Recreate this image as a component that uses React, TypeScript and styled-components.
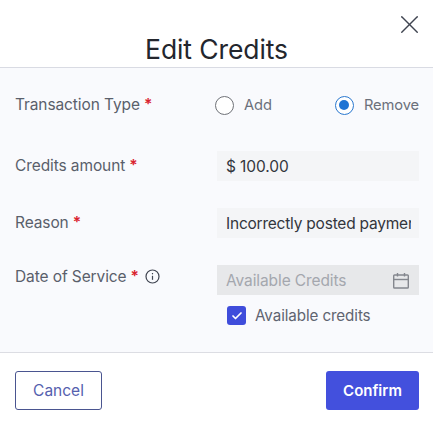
import styled, { createGlobalStyle } from 'styled-components';
import { X, Check } from 'lucide-react';

const GlobalStyle = createGlobalStyle`
  html, body {
    margin: 0;
    padding: 0;
    background: #ffffff;
    font-family: Inter, "Noto Sans", sans-serif;
  }
  * { box-sizing: border-box; }
`;

const Dialog = styled.div`
  width: 433px;
  height: 424px;
  display: flex;
  flex-direction: column;
  overflow: hidden;
  background: #ffffff;
`;

const Header = styled.header`
  height: 68px;
  padding: 9px 8px 0;
  display: flex;
  flex-direction: column;
  border-bottom: 1px solid #d9dbe3;
`;

const CloseButton = styled.button`
  align-self: flex-end;
  width: 31px;
  height: 24px;
  padding: 0;
  border: 0;
  background: none;
  color: #3f4450;
  display: flex;
`;

const Title = styled.h2`
  margin: 0;
  font-size: 26.5px;
  line-height: 32px;
  font-weight: 400;
  letter-spacing: -0.1px;
  color: #23262d;
  text-align: center;
`;

const Body = styled.div`
  height: 285px;
  padding: 27px 14px 0 15px;
  background: #f9fafd;
  border-bottom: 1px solid #dcdde3;
  display: flex;
  flex-direction: column;
`;

const Row = styled.div<{ $height: number }>`
  height: ${(p) => p.$height}px;
  display: grid;
  grid-template-columns: 202px 202px;
`;

const Label = styled.label<{ $offset?: number }>`
  display: flex;
  align-items: flex-start;
  gap: 4px;
  padding-top: ${(p) => p.$offset ?? 0}px;
  font-size: 15.5px;
  line-height: 20px;
  letter-spacing: -0.1px;
  color: #5a5f6b;
`;

const Star = styled.span`
  color: #d9232e;
  font-weight: 600;
`;

const InfoIcon = styled.svg`
  flex: none;
  width: 15px;
  height: 15px;
  margin: 2px 0 0 2px;
  color: #3f4450;
`;

const RadioGroup = styled.div`
  display: flex;
  align-items: center;
  justify-content: space-between;
  height: 20px;
  margin-left: -2px;
`;

const RadioOption = styled.span`
  display: flex;
  align-items: center;
  gap: 10px;
  font-size: 14.7px;
  letter-spacing: -0.1px;
  color: #6b707b;
`;

const RadioCircle = styled.span<{ $checked?: boolean }>`
  width: 19px;
  height: 19px;
  border-radius: 50%;
  border: 1.5px solid ${(p) => (p.$checked ? '#2a78cf' : '#6f7278')};
  background: #ffffff;
  display: flex;
  align-items: center;
  justify-content: center;
  &::after {
    content: '';
    display: ${(p) => (p.$checked ? 'block' : 'none')};
    width: 10px;
    height: 10px;
    border-radius: 50%;
    background: #1f74d4;
  }
`;

const Field = styled.div<{ $disabled?: boolean }>`
  height: 30px;
  padding: 0 8px 0 9px;
  display: flex;
  align-items: center;
  justify-content: space-between;
  overflow: hidden;
  white-space: nowrap;
  font-size: 15.5px;
  letter-spacing: -0.1px;
  background: ${(p) => (p.$disabled ? '#e7e8ea' : '#f4f5f7')};
  color: ${(p) => (p.$disabled ? '#a4a7ae' : '#33363d')};
`;

const FieldText = styled.span`
  flex: 1;
  overflow: hidden;
`;

const ReasonText = styled(FieldText)`
  letter-spacing: -0.22px;
`;

const CalendarIcon = styled.svg`
  flex: none;
  width: 18px;
  height: 18px;
  margin: 1px 1px 0 0;
  color: #84878e;
`;

const DateColumn = styled.div`
  display: flex;
  flex-direction: column;
  gap: 11px;
`;

const CheckRow = styled.div`
  display: flex;
  align-items: center;
  gap: 9px;
  padding-left: 10px;
  font-size: 15.2px;
  letter-spacing: -0.1px;
  color: #5f6470;
`;

const CheckBox = styled.span`
  width: 19px;
  height: 19px;
  border-radius: 3px;
  background: #3f4ddb;
  color: #ffffff;
  display: flex;
  align-items: center;
  justify-content: center;
`;

const Footer = styled.footer`
  flex: 1;
  padding: 18px 14px 0 15px;
  display: flex;
  justify-content: space-between;
  align-items: flex-start;
`;

const CancelButton = styled.button`
  width: 87px;
  height: 39px;
  border: 1px solid #4a5590;
  border-radius: 3px;
  background: #ffffff;
  color: #5560ae;
  font-family: inherit;
  font-size: 15.5px;
`;

const ConfirmButton = styled.button`
  width: 93px;
  height: 39px;
  border: 0;
  border-radius: 3px;
  background: #4350dd;
  color: #ffffff;
  font-family: inherit;
  font-size: 15px;
  font-weight: 600;
`;

const App = () => {
  return (
    <Dialog>
      <GlobalStyle />
      <Header>
        <CloseButton aria-label="Close">
          <X size={31} strokeWidth={1.1} />
        </CloseButton>
        <Title>Edit Credits</Title>
      </Header>
      <Body>
        <Row $height={56}>
          <Label>
            Transaction Type <Star>*</Star>
          </Label>
          <RadioGroup>
            <RadioOption>
              <RadioCircle />
              Add
            </RadioOption>
            <RadioOption>
              <RadioCircle $checked />
              Remove
            </RadioOption>
          </RadioGroup>
        </Row>
        <Row $height={57}>
          <Label $offset={5}>
            Credits amount <Star>*</Star>
          </Label>
          <Field>$ 100.00</Field>
        </Row>
        <Row $height={57}>
          <Label $offset={5}>
            Reason <Star>*</Star>
          </Label>
          <Field>
            <ReasonText>Incorrectly posted payment</ReasonText>
          </Field>
        </Row>
        <Row $height={60}>
          <Label $offset={2}>
            Date of Service <Star>*</Star>
            <InfoIcon viewBox="0 0 15 15" fill="none" stroke="currentColor" strokeWidth="1.2">
              <circle cx="7.5" cy="7.5" r="6.5" />
              <path d="M7.5 6.8v4" />
              <path d="M7.5 4v1.3" />
            </InfoIcon>
          </Label>
          <DateColumn>
            <Field $disabled>
              <FieldText>Available Credits</FieldText>
              <CalendarIcon viewBox="0 0 18 18" fill="none" stroke="currentColor" strokeWidth="1.4">
                <rect x="1.7" y="3" width="14.6" height="13" rx="0.8" />
                <path d="M1.7 7.5h14.6" />
                <path d="M5.5 1v3.5M12.5 1v3.5" />
              </CalendarIcon>
            </Field>
            <CheckRow>
              <CheckBox>
                <Check size={12} strokeWidth={3.5} />
              </CheckBox>
              Available credits
            </CheckRow>
          </DateColumn>
        </Row>
      </Body>
      <Footer>
        <CancelButton>Cancel</CancelButton>
        <ConfirmButton>Confirm</ConfirmButton>
      </Footer>
    </Dialog>
  );
};

export default App;
